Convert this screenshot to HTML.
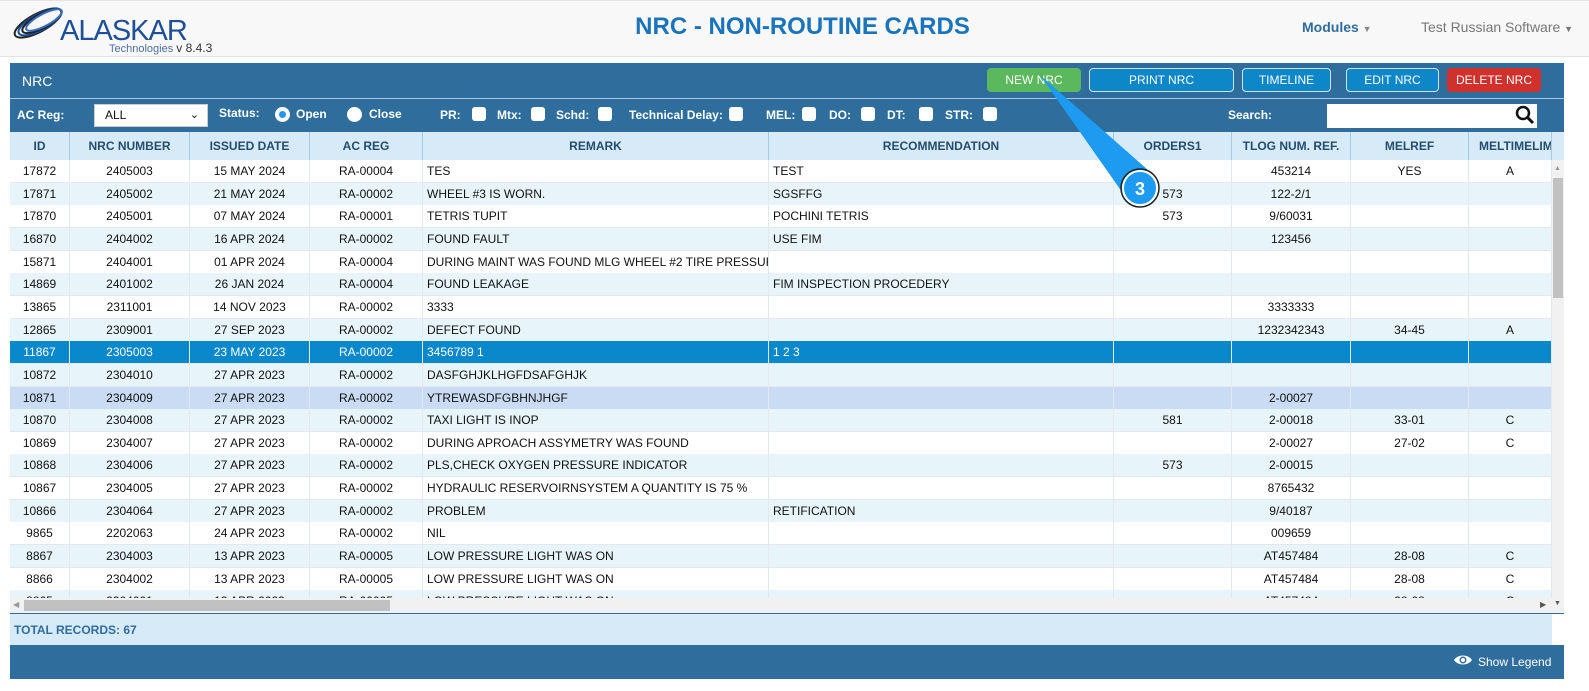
<!DOCTYPE html>
<html><head><meta charset="utf-8"><style>
*{box-sizing:border-box;margin:0;padding:0}
body{width:1589px;height:691px;background:#fff;font-family:"Liberation Sans",Arial,sans-serif;position:relative;overflow:hidden;font-size:12px;color:#111}
.hdr{position:absolute;left:0;top:0;width:1589px;height:57px;background:#f8f8f8;border-bottom:1px solid #e3e3e3;border-top:1px solid #e3e3e3}
.title{position:absolute;left:0;width:1605px;top:12px;text-align:center;font-size:24px;font-weight:bold;color:#1a74bb}
.nav{position:absolute;top:18px;font-size:14px}
.panel{position:absolute;left:10px;top:63px;width:1554px;height:616px;background:#2e6d9c}
.btn{position:absolute;top:68px;height:24px;border:1px solid #cfe3f2;border-radius:4px;background:#0e87c9;color:#fff;font-size:12px;text-align:center;line-height:22px}
.filt{position:absolute;top:106px;color:#fff;font-weight:bold;font-size:12px}
.cb{position:absolute;top:107px;width:14px;height:14px;background:#fff;border-radius:3px}
.thead{position:absolute;left:10px;top:132px;width:1554px;height:28px;background:#d7eaf7}
.th{position:absolute;top:0;height:28px;line-height:28px;text-align:center;font-weight:bold;color:#234d6e;font-size:12px;border-right:1px solid #aac8e0;overflow:hidden;white-space:nowrap}
.row{position:absolute;left:10px;width:1542px;height:23px;border-bottom:1px solid #e2e8ec}
.td{position:absolute;top:0;height:22px;line-height:22px;white-space:nowrap;overflow:hidden;border-right:1px solid #e2e8ec;font-size:12px}
.c{text-align:center}.l{padding-left:4px}
</style></head><body>
<div class="hdr">
 <svg style="position:absolute;left:8px;top:5px" width="60" height="36" viewBox="0 0 60 36">
  <g fill="none" stroke-width="2">
   <ellipse cx="30" cy="17" rx="26" ry="9" transform="rotate(-28 30 17)" stroke="#222"/>
   <ellipse cx="32" cy="16" rx="24" ry="8" transform="rotate(-28 32 16)" stroke="#1a4f9c"/>
   <ellipse cx="34" cy="15" rx="22" ry="7" transform="rotate(-28 34 15)" stroke="#222"/>
   <ellipse cx="36" cy="14" rx="20" ry="6" transform="rotate(-28 36 14)" stroke="#3a6fc0"/>
  </g></svg>
 <div style="position:absolute;left:60px;top:14px;font-size:29px;color:#1e4f98;letter-spacing:-1px">ALASKAR</div>
 <div style="position:absolute;left:109px;top:40px;font-size:11px;color:#4a6fa6">Technologies <span style="color:#333;font-size:12px">v 8.4.3</span></div>
 <div class="title">NRC - NON-ROUTINE CARDS</div>
 <div class="nav" style="left:1302px;font-weight:bold;color:#2e6d9c">Modules <span style="font-size:9px;color:#888">▼</span></div>
 <div class="nav" style="left:1421px;color:#777">Test Russian Software <span style="font-size:9px">▼</span></div>
</div>
<div class="panel"></div>
<div style="position:absolute;left:10px;top:98px;width:1554px;height:1px;background:#a7c5dc"></div>
<div style="position:absolute;left:22px;top:73px;color:#fff;font-size:14px">NRC</div>
<div class="btn" style="left:987px;width:94px;background:#5cb85c;border-color:#5cb85c">NEW NRC</div>
<div class="btn" style="left:1089px;width:145px">PRINT NRC</div>
<div class="btn" style="left:1242px;width:89px">TIMELINE</div>
<div class="btn" style="left:1346px;width:93px">EDIT NRC</div>
<div class="btn" style="left:1447px;width:94px;background:#d0312d;border-color:#d0312d">DELETE NRC</div>
<div class="filt" style="left:17px;top:108px">AC Reg:</div>
<div style="position:absolute;left:94px;top:104px;width:114px;height:23px;background:#fff;border:1px solid #ccc;padding-left:10px;line-height:21px;font-size:12px">ALL<span style="position:absolute;right:8px;top:0;font-size:11px">⌄</span></div>
<div class="filt" style="left:219px;top:106px">Status:</div>
<div style="position:absolute;left:275px;top:107px;width:15px;height:15px;border-radius:50%;background:#fff"><div style="margin:4px;width:7px;height:7px;border-radius:50%;background:#2196f3"></div></div>
<div class="filt" style="left:296px;top:107px">Open</div>
<div style="position:absolute;left:347px;top:107px;width:15px;height:15px;border-radius:50%;background:#fff"></div>
<div class="filt" style="left:369px;top:107px">Close</div>
<div class="filt" style="left:440px;top:108px">PR:</div><div class="cb" style="left:472px"></div>
<div class="filt" style="left:497px;top:108px">Mtx:</div><div class="cb" style="left:531px"></div>
<div class="filt" style="left:556px;top:108px">Schd:</div><div class="cb" style="left:598px"></div>
<div class="filt" style="left:629px;top:108px">Technical Delay:</div><div class="cb" style="left:729px"></div>
<div class="filt" style="left:766px;top:108px">MEL:</div><div class="cb" style="left:802px"></div>
<div class="filt" style="left:829px;top:108px">DO:</div><div class="cb" style="left:861px"></div>
<div class="filt" style="left:887px;top:108px">DT:</div><div class="cb" style="left:919px"></div>
<div class="filt" style="left:945px;top:108px">STR:</div><div class="cb" style="left:983px"></div>
<div class="filt" style="left:1228px;top:108px">Search:</div>
<div style="position:absolute;left:1274px;top:104px;width:0"></div>
<div style="position:absolute;left:1327px;top:104px;width:210px;height:24px;background:#fff"></div>
<svg style="position:absolute;left:1515px;top:105px" width="20" height="20" viewBox="0 0 20 20"><circle cx="8" cy="8" r="6" fill="none" stroke="#111" stroke-width="2.5"/><path d="M12.5 12.5L18 18" stroke="#111" stroke-width="3"/></svg>
<div class="thead">
<div class="th" style="left:0;width:60px">ID</div>
<div class="th" style="left:60px;width:120px">NRC NUMBER</div>
<div class="th" style="left:180px;width:120px">ISSUED DATE</div>
<div class="th" style="left:300px;width:113px">AC REG</div>
<div class="th" style="left:413px;width:346px">REMARK</div>
<div class="th" style="left:759px;width:345px">RECOMMENDATION</div>
<div class="th" style="left:1104px;width:118px">ORDERS1</div>
<div class="th" style="left:1222px;width:119px">TLOG NUM. REF.</div>
<div class="th" style="left:1341px;width:118px">MELREF</div>
<div class="th" style="left:1459px;width:83px;text-align:left;padding-left:10px">MELTIMELIMIT</div>
</div>
<div style="position:absolute;left:10px;top:160px;width:1542px;height:438px;background:#fff;overflow:hidden" id="tb">
<div id="rows"></div>
</div>
<div style="position:absolute;left:1552px;top:160px;width:12px;height:453px;background:#f1f1f1"><div style="position:absolute;left:1px;top:18px;width:10px;height:120px;background:#c1c1c1"></div><div style="position:absolute;left:2px;top:5px;font-size:7px;color:#999">▲</div><div style="position:absolute;left:2px;top:440px;font-size:7px;color:#555">▼</div></div>
<div style="position:absolute;left:10px;top:598px;width:1542px;height:15px;background:#f1f1f1"><div style="position:absolute;left:14px;top:2px;width:366px;height:11px;background:#c1c1c1"></div><div style="position:absolute;left:3px;top:2px;font-size:8px;color:#999">◀</div><div style="position:absolute;left:1530px;top:2px;font-size:8px;color:#555">▶</div></div>
<div style="position:absolute;left:10px;top:614px;width:1542px;height:31px;background:#d7eaf7;color:#2e6d9c;font-weight:bold;font-size:12px;line-height:33px;padding-left:4px">TOTAL RECORDS: 67</div>
<div style="position:absolute;left:1552px;top:614px;width:12px;height:31px;background:#fff"></div>
<svg style="position:absolute;left:1453px;top:653px" width="20" height="14" viewBox="0 0 20 14"><path d="M1 7C5 1 15 1 19 7C15 13 5 13 1 7Z" fill="#fff"/><circle cx="10" cy="7" r="3.5" fill="#2e6d9c"/><circle cx="10" cy="7" r="2" fill="#fff"/></svg>
<div style="position:absolute;left:1478px;top:655px;color:#fff;font-size:12px">Show Legend</div>
<svg style="position:absolute;left:1030px;top:70px" width="135" height="140" viewBox="0 0 135 140"><path d="M10 5L118 100L92 122Z" fill="#1d9bf0"/><circle cx="110" cy="118" r="17" fill="#1d9bf0" stroke="#fff" stroke-width="2"/><circle cx="110" cy="118" r="19" fill="none" stroke="#222" stroke-width="1.5"/><text x="110" y="125" text-anchor="middle" font-family="Liberation Sans" font-weight="bold" font-size="18" fill="#fff">3</text></svg>
<script>
var d=[["17872","2405003","15 MAY 2024","RA-00004","TES","TEST","","453214","YES","A"],
["17871","2405002","21 MAY 2024","RA-00002","WHEEL #3 IS WORN.","SGSFFG","573","122-2/1","",""],
["17870","2405001","07 MAY 2024","RA-00001","TETRIS TUPIT","POCHINI TETRIS","573","9/60031","",""],
["16870","2404002","16 APR 2024","RA-00002","FOUND FAULT","USE FIM","","123456","",""],
["15871","2404001","01 APR 2024","RA-00004","DURING MAINT WAS FOUND MLG WHEEL #2 TIRE PRESSURE LOW","","","","",""],
["14869","2401002","26 JAN 2024","RA-00004","FOUND LEAKAGE","FIM INSPECTION PROCEDERY","","","",""],
["13865","2311001","14 NOV 2023","RA-00002","3333","","","3333333","",""],
["12865","2309001","27 SEP 2023","RA-00002","DEFECT FOUND","","","1232342343","34-45","A"],
["11867","2305003","23 MAY 2023","RA-00002","3456789 1","1 2 3","","","",""],
["10872","2304010","27 APR 2023","RA-00002","DASFGHJKLHGFDSAFGHJK","","","","",""],
["10871","2304009","27 APR 2023","RA-00002","YTREWASDFGBHNJHGF","","","2-00027","",""],
["10870","2304008","27 APR 2023","RA-00002","TAXI LIGHT IS INOP","","581","2-00018","33-01","C"],
["10869","2304007","27 APR 2023","RA-00002","DURING APROACH ASSYMETRY WAS FOUND","","","2-00027","27-02","C"],
["10868","2304006","27 APR 2023","RA-00002","PLS,CHECK OXYGEN PRESSURE INDICATOR","","573","2-00015","",""],
["10867","2304005","27 APR 2023","RA-00002","HYDRAULIC RESERVOIRNSYSTEM A QUANTITY IS 75 %","","","8765432","",""],
["10866","2304064","27 APR 2023","RA-00002","PROBLEM","RETIFICATION","","9/40187","",""],
["9865","2202063","24 APR 2023","RA-00002","NIL","","","009659","",""],
["8867","2304003","13 APR 2023","RA-00005","LOW PRESSURE LIGHT WAS ON","","","AT457484","28-08","C"],
["8866","2304002","13 APR 2023","RA-00005","LOW PRESSURE LIGHT WAS ON","","","AT457484","28-08","C"],
["8865","2304001","13 APR 2023","RA-00005","LOW PRESSURE LIGHT WAS ON","","","AT457484","28-08","C"]];
var cols=[[0,60,"c"],[60,120,"c"],[180,120,"c"],[300,113,"c"],[413,346,"l"],[759,345,"l"],[1104,118,"c"],[1222,119,"c"],[1341,118,"c"],[1459,83,"c"]];
var h="";
d.forEach(function(r,i){var bg=i%2?"#e7f5fa":"#fff",col="#111";if(i==8){bg="#0a88cc";col="#fff"}if(i==10)bg="#cadcf3";
h+='<div class="row" style="left:0;top:'+(i*22.65)+'px;background:'+bg+';color:'+col+'">';
cols.forEach(function(c,j){h+='<div class="td '+c[2]+'" style="left:'+c[0]+'px;width:'+c[1]+'px">'+r[j]+'</div>'});h+='</div>'});
document.getElementById("rows").innerHTML=h;
</script>
</body></html>
